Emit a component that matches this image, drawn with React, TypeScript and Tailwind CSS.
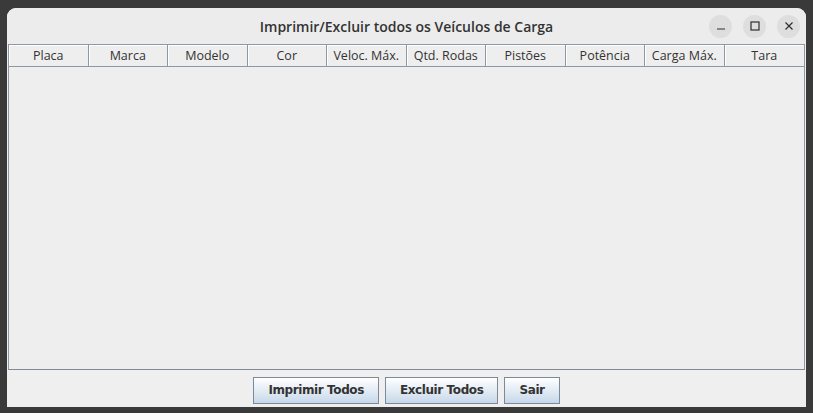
const columns = [
  'Placa',
  'Marca',
  'Modelo',
  'Cor',
  'Veloc. Máx.',
  'Qtd. Rodas',
  'Pistões',
  'Potência',
  'Carga Máx.',
  'Tara',
];

const buttons = ['Imprimir Todos', 'Excluir Todos', 'Sair'];

function WindowButton({ children }: { children: React.ReactNode }) {
  return (
    <div className="flex h-[23px] w-[23px] items-center justify-center rounded-full bg-[#dedede] text-[#2e2e2e]">
      {children}
    </div>
  );
}

export default function App() {
  return (
    <div className="h-[413px] w-[813px] bg-[#3a3a3a] pl-[7px] pt-[8px]">
      <div
        className="flex h-[399px] w-[799px] flex-col overflow-hidden rounded-t-[9px] bg-[#efefef]"
        style={{ fontFamily: '"Open Sans", "Noto Sans", sans-serif' }}
      >
        {/* title bar */}
        <div className="grid h-[36px] shrink-0 grid-cols-[1fr_auto_1fr] items-center bg-[#ececec]">
          <div />
          <div className="text-[14px] font-semibold text-[#333333]">
            Imprimir/Excluir todos os Veículos de Carga
          </div>
          <div className="flex items-center justify-end gap-[11px] pr-[6px]">
            <WindowButton>
              <svg width="10" height="10" viewBox="0 0 10 10">
                <path d="M1 8h8" stroke="currentColor" strokeWidth="1.2" />
              </svg>
            </WindowButton>
            <WindowButton>
              <svg width="10" height="10" viewBox="0 0 10 10">
                <rect x="1" y="1" width="8" height="8" fill="none" stroke="currentColor" strokeWidth="1.2" />
              </svg>
            </WindowButton>
            <WindowButton>
              <svg width="10" height="10" viewBox="0 0 10 10">
                <path d="M1.5 1.5l7 7M8.5 1.5l-7 7" stroke="currentColor" strokeWidth="1.2" />
              </svg>
            </WindowButton>
          </div>
        </div>

        {/* table */}
        <div className="mx-[1px] h-[326px] shrink-0 border border-[#8e98a4] border-b-[#7f8a96] bg-[#eeeeee]">
          <div className="grid h-[22px] grid-cols-10 border-b border-[#8e98a4]">
            {columns.map((col, i) => (
              <div
                key={col}
                className={`flex items-center justify-center border-r border-[#8e98a4] bg-[#eeeeee] pt-[1px] text-[12.5px] text-[#333333] shadow-[inset_1px_1px_0_#ffffff] ${
                  i === columns.length - 1 ? 'border-r-0' : ''
                }`}
              >
                {col}
              </div>
            ))}
          </div>
        </div>

        {/* buttons */}
        <div className="flex flex-1 items-center justify-center gap-[6px] pt-[3px]">
          {buttons.map((b) => (
            <button
              key={b}
              className="h-[27px] border border-[#7a8a99] bg-gradient-to-b from-[#ffffff] to-[#c7d8ea] px-[14px] text-[12px] font-bold tracking-[-0.4px] text-[#333333]"
              style={{ fontFamily: '"DejaVu Sans", sans-serif' }}
            >
              {b}
            </button>
          ))}
        </div>
      </div>
    </div>
  );
}
